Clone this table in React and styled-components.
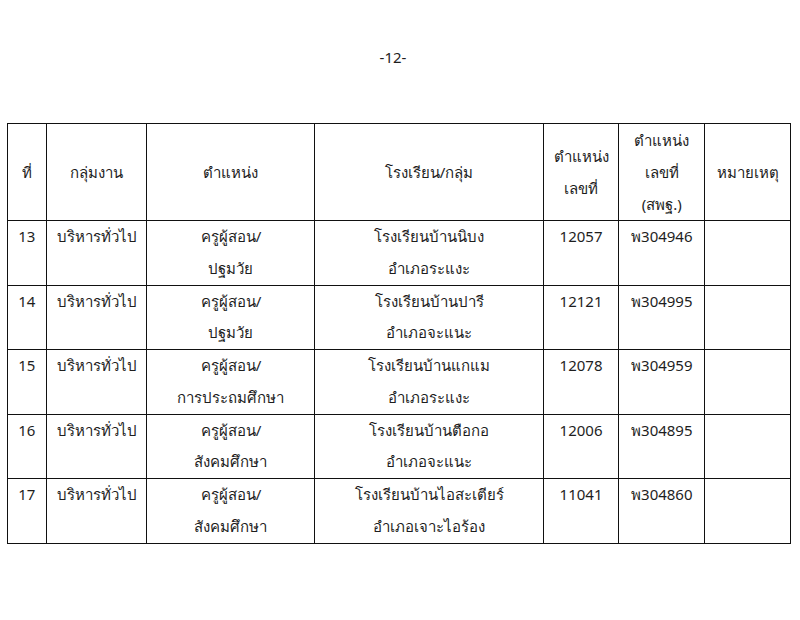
import React from 'react';
import styled, { createGlobalStyle } from 'styled-components';

const GlobalStyle = createGlobalStyle`
  html, body {
    margin: 0;
    padding: 0;
    background: #ffffff;
  }
  body {
    font-family: "Noto Sans", "DejaVu Sans", sans-serif;
    color: #1e1e1e;
  }
`;

const Page = styled.div`
  width: 800px;
  height: 620px;
  padding-top: 44px;
  box-sizing: border-box;
`;

const PageNumber = styled.div`
  text-align: center;
  font-size: 15px;
  line-height: 26px;
  margin-left: -14px;
`;

const Table = styled.table`
  margin: 53px 0 0 7px;
  width: 784px;
  border-collapse: collapse;
  table-layout: fixed;
  font-size: 15px;
`;

const HeadCell = styled.th`
  border: 1.5px solid #111;
  height: 95px;
  padding: 0;
  font-weight: normal;
  text-align: center;
  vertical-align: middle;
  line-height: 32px;
  width: ${(p) => p.$w}px;
`;

const Cell = styled.td`
  border: 1.5px solid #111;
  height: 63px;
  padding: 0;
  text-align: center;
  vertical-align: top;
  line-height: 31.75px;
  box-sizing: border-box;
`;

const Line = styled.div`
  white-space: nowrap;
`;

const columns = [
  { w: 37.5, label: ['ที่'] },
  { w: 99.5, label: ['กลุ่มงาน'] },
  { w: 166.5, label: ['ตำแหน่ง'] },
  { w: 226.5, label: ['โรงเรียน/กลุ่ม'] },
  { w: 74.5, label: ['ตำแหน่ง', 'เลขที่'] },
  { w: 84.5, label: ['ตำแหน่ง', 'เลขที่', '(สพฐ.)'] },
  { w: 84.5, label: ['หมายเหตุ'] },
];

const rows = [
  {
    no: '13',
    group: 'บริหารทั่วไป',
    position: ['ครูผู้สอน/', 'ปฐมวัย'],
    school: ['โรงเรียนบ้านนิบง', 'อำเภอระแงะ'],
    num: '12057',
    obec: 'พ304946',
  },
  {
    no: '14',
    group: 'บริหารทั่วไป',
    position: ['ครูผู้สอน/', 'ปฐมวัย'],
    school: ['โรงเรียนบ้านปารี', 'อำเภอจะแนะ'],
    num: '12121',
    obec: 'พ304995',
  },
  {
    no: '15',
    group: 'บริหารทั่วไป',
    position: ['ครูผู้สอน/', 'การประถมศึกษา'],
    school: ['โรงเรียนบ้านแกแม', 'อำเภอระแงะ'],
    num: '12078',
    obec: 'พ304959',
  },
  {
    no: '16',
    group: 'บริหารทั่วไป',
    position: ['ครูผู้สอน/', 'สังคมศึกษา'],
    school: ['โรงเรียนบ้านตือกอ', 'อำเภอจะแนะ'],
    num: '12006',
    obec: 'พ304895',
  },
  {
    no: '17',
    group: 'บริหารทั่วไป',
    position: ['ครูผู้สอน/', 'สังคมศึกษา'],
    school: ['โรงเรียนบ้านไอสะเตียร์', 'อำเภอเจาะไอร้อง'],
    num: '11041',
    obec: 'พ304860',
  },
];

function Lines({ items }) {
  return items.map((t) => <Line key={t}>{t}</Line>);
}

export default function App() {
  return (
    <>
      <GlobalStyle />
      <Page>
        <PageNumber>-12-</PageNumber>
        <Table>
          <thead>
            <tr>
              {columns.map((c) => (
                <HeadCell key={c.label.join()} $w={c.w}>
                  <Lines items={c.label} />
                </HeadCell>
              ))}
            </tr>
          </thead>
          <tbody>
            {rows.map((r) => (
              <tr key={r.no}>
                <Cell>{r.no}</Cell>
                <Cell>{r.group}</Cell>
                <Cell>
                  <Lines items={r.position} />
                </Cell>
                <Cell>
                  <Lines items={r.school} />
                </Cell>
                <Cell>{r.num}</Cell>
                <Cell>{r.obec}</Cell>
                <Cell />
              </tr>
            ))}
          </tbody>
        </Table>
      </Page>
    </>
  );
}
